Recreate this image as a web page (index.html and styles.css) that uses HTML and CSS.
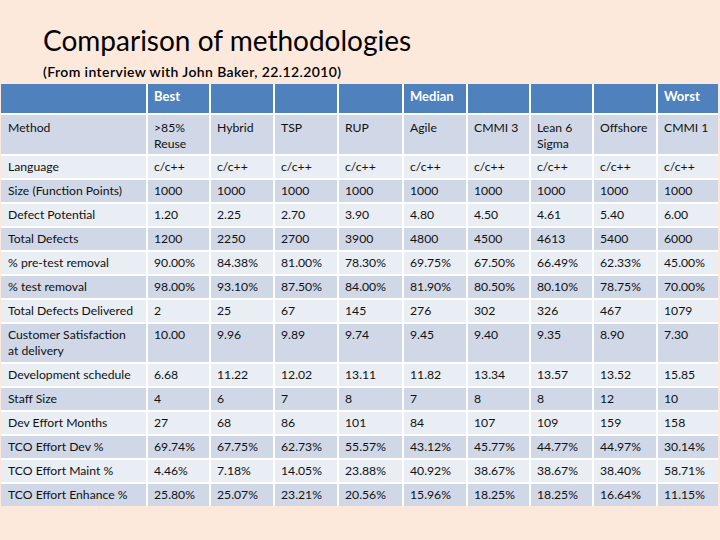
FILE: index.html
```html
<!DOCTYPE html>
<html>
<head>
<meta charset="utf-8">
<link rel="stylesheet" href="styles.css">
</head>
<body>
<div class="slide">
  <h1 class="title">Comparison of methodologies</h1>
  <p class="subtitle">(From interview with John Baker, 22.12.2010)</p>
  <div class="grid">
    <div class="hd"></div><div class="hd">Best</div><div class="hd"></div><div class="hd"></div><div class="hd"></div><div class="hd">Median</div><div class="hd"></div><div class="hd"></div><div class="hd"></div><div class="hd">Worst</div>

    <div class="c d tall">Method</div><div class="c d tall">&gt;85%<br>Reuse</div><div class="c d tall">Hybrid</div><div class="c d tall">TSP</div><div class="c d tall">RUP</div><div class="c d tall">Agile</div><div class="c d tall">CMMI 3</div><div class="c d tall">Lean 6<br>Sigma</div><div class="c d tall">Offshore</div><div class="c d tall">CMMI 1</div>

    <div class="c l">Language</div><div class="c l">c/c++</div><div class="c l">c/c++</div><div class="c l">c/c++</div><div class="c l">c/c++</div><div class="c l">c/c++</div><div class="c l">c/c++</div><div class="c l">c/c++</div><div class="c l">c/c++</div><div class="c l">c/c++</div>

    <div class="c d">Size (Function Points)</div><div class="c d">1000</div><div class="c d">1000</div><div class="c d">1000</div><div class="c d">1000</div><div class="c d">1000</div><div class="c d">1000</div><div class="c d">1000</div><div class="c d">1000</div><div class="c d">1000</div>

    <div class="c l">Defect Potential</div><div class="c l">1.20</div><div class="c l">2.25</div><div class="c l">2.70</div><div class="c l">3.90</div><div class="c l">4.80</div><div class="c l">4.50</div><div class="c l">4.61</div><div class="c l">5.40</div><div class="c l">6.00</div>

    <div class="c d">Total Defects</div><div class="c d">1200</div><div class="c d">2250</div><div class="c d">2700</div><div class="c d">3900</div><div class="c d">4800</div><div class="c d">4500</div><div class="c d">4613</div><div class="c d">5400</div><div class="c d">6000</div>

    <div class="c l">% pre-test removal</div><div class="c l">90.00%</div><div class="c l">84.38%</div><div class="c l">81.00%</div><div class="c l">78.30%</div><div class="c l">69.75%</div><div class="c l">67.50%</div><div class="c l">66.49%</div><div class="c l">62.33%</div><div class="c l">45.00%</div>

    <div class="c d">% test removal</div><div class="c d">98.00%</div><div class="c d">93.10%</div><div class="c d">87.50%</div><div class="c d">84.00%</div><div class="c d">81.90%</div><div class="c d">80.50%</div><div class="c d">80.10%</div><div class="c d">78.75%</div><div class="c d">70.00%</div>

    <div class="c l">Total Defects Delivered</div><div class="c l">2</div><div class="c l">25</div><div class="c l">67</div><div class="c l">145</div><div class="c l">276</div><div class="c l">302</div><div class="c l">326</div><div class="c l">467</div><div class="c l">1079</div>

    <div class="c d tall2">Customer Satisfaction<br>at delivery</div><div class="c d tall2">10.00</div><div class="c d tall2">9.96</div><div class="c d tall2">9.89</div><div class="c d tall2">9.74</div><div class="c d tall2">9.45</div><div class="c d tall2">9.40</div><div class="c d tall2">9.35</div><div class="c d tall2">8.90</div><div class="c d tall2">7.30</div>

    <div class="c l">Development schedule</div><div class="c l">6.68</div><div class="c l">11.22</div><div class="c l">12.02</div><div class="c l">13.11</div><div class="c l">11.82</div><div class="c l">13.34</div><div class="c l">13.57</div><div class="c l">13.52</div><div class="c l">15.85</div>

    <div class="c d">Staff Size</div><div class="c d">4</div><div class="c d">6</div><div class="c d">7</div><div class="c d">8</div><div class="c d">7</div><div class="c d">8</div><div class="c d">8</div><div class="c d">12</div><div class="c d">10</div>

    <div class="c l">Dev Effort Months</div><div class="c l">27</div><div class="c l">68</div><div class="c l">86</div><div class="c l">101</div><div class="c l">84</div><div class="c l">107</div><div class="c l">109</div><div class="c l">159</div><div class="c l">158</div>

    <div class="c d">TCO Effort Dev %</div><div class="c d">69.74%</div><div class="c d">67.75%</div><div class="c d">62.73%</div><div class="c d">55.57%</div><div class="c d">43.12%</div><div class="c d">45.77%</div><div class="c d">44.77%</div><div class="c d">44.97%</div><div class="c d">30.14%</div>

    <div class="c l">TCO Effort Maint %</div><div class="c l">4.46%</div><div class="c l">7.18%</div><div class="c l">14.05%</div><div class="c l">23.88%</div><div class="c l">40.92%</div><div class="c l">38.67%</div><div class="c l">38.67%</div><div class="c l">38.40%</div><div class="c l">58.71%</div>

    <div class="c d">TCO Effort Enhance %</div><div class="c d">25.80%</div><div class="c d">25.07%</div><div class="c d">23.21%</div><div class="c d">20.56%</div><div class="c d">15.96%</div><div class="c d">18.25%</div><div class="c d">18.25%</div><div class="c d">16.64%</div><div class="c d">11.15%</div>
  </div>
</div>
</body>
</html>
```

FILE: styles.css
```css
html, body {
  margin: 0;
  padding: 0;
  background: #fde9dc;
}
.slide {
  width: 720px;
  height: 540px;
  background: #fde9dc;
  font-family: Lato, "Open Sans", sans-serif;
  color: #000;
  overflow: hidden;
  padding-top: 23px;
  box-sizing: border-box;
}
.title {
  margin: 0 0 0 43px;
  font-size: 28px;
  font-weight: 400;
  line-height: 34px;
  height: 34px;
}
.subtitle {
  margin: 5px 0 0 43px;
  font-size: 14px;
  font-weight: 600;
  line-height: 20px;
  height: 22px;
  letter-spacing: 0.4px;
}
.grid {
  margin-left: 1px;
  width: 717px;
  display: grid;
  grid-template-columns: 145px 61px 62px 62px 63px 62px 61px 61px 62px 60px;
  grid-template-rows: 29px 39px repeat(7, 22px) 38px repeat(6, 22px);
  gap: 2px;
  background: #ffffff;
  font-size: 12.2px;
  line-height: 16px;
  color: #111;
}
.hd {
  background: #4f81bd;
  color: #fff;
  font-weight: 700;
  font-size: 13px;
  padding: 4px 0 0 6px;
}
.c {
  padding: 3px 0 0 6px;
  white-space: nowrap;
}
.c:nth-child(10n+1) {
  padding-left: 7px;
}
.tall {
  padding-top: 5px;
}
.d {
  background: #d0d8e8;
}
.l {
  background: #e9edf4;
}
```
